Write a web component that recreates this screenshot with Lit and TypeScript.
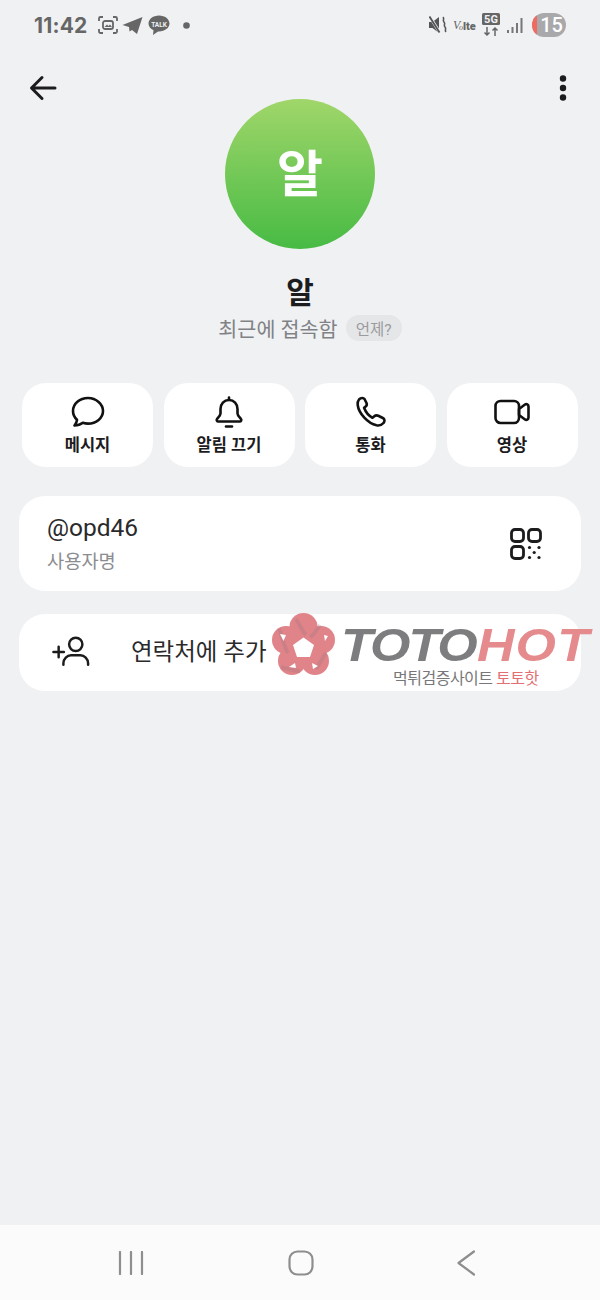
import { LitElement, html, css } from "lit";
import { customElement } from "lit/decorators.js";

@customElement("app-root")
export class AppRoot extends LitElement {
  static styles = css`
    :host { display: block; width: 600px; height: 1300px; background: #f0f1f3; position: relative; overflow: hidden; font-family: Roboto, "Noto Sans CJK KR", sans-serif; color: #1c1c1e; }
    svg { display: block; }
    .page { height: 1300px; display: flex; flex-direction: column; }
    .status { height: 50px; flex: none; display: flex; align-items: center; justify-content: space-between; padding: 0 34px; color: #666; }
    .status-left, .status-right { display: flex; align-items: center; }
    .time { font-size: 21px; font-weight: 700; color: #666; margin-right: 9px; letter-spacing: 0.2px; font-family: Inter, Roboto, sans-serif; }
    .tg { margin-left: 3px; }
    .tk { margin-left: 5px; }
    .dot { margin-left: 13px; }
    .vo { margin-left: 6px; }
    .fg { margin-left: 4px; }
    .sig { margin-left: 6px; }
    .battery { width: 34px; height: 24px; border-radius: 12px; background: #a9a9ab; color: #fff; font-size: 20px; font-weight: 500; display: flex; align-items: center; justify-content: center; overflow: hidden; position: relative; margin-left: 9px; }
    .battery i { position: absolute; left: 0; top: 0; bottom: 0; width: 5px; background: #f06a60; }
    .battery span { position: relative; padding-left: 5px; }
    .topbar { height: 49px; flex: none; display: flex; align-items: flex-start; justify-content: space-between; padding: 24px 33px 0 28px; box-sizing: border-box; }
    .hero { display: flex; flex-direction: column; align-items: center; }
    .avatar { width: 150px; height: 150px; border-radius: 50%; background: linear-gradient(180deg, #a0d66a 0%, #47bb44 100%); color: #fff; font-size: 50px; font-weight: 700; display: flex; align-items: center; justify-content: center; padding-bottom: 8px; box-sizing: border-box; }
    .name { font-size: 30px; font-weight: 700; line-height: 36px; margin-top: 26px; color: #1c1c1e; }
    .sub { display: flex; align-items: center; gap: 8px; margin-top: 1px; height: 32px; margin-left: 20px; }
    .sub b { font-weight: 400; font-size: 20.7px; color: #808285; }
    .pill { height: 26px; width: 56px; border-radius: 13px; background: #e5e6e8; color: #9a9b9e; font-size: 15.5px; display: flex; align-items: center; justify-content: center; }
    .actions { display: grid; grid-template-columns: repeat(4, 131px); column-gap: 10.5px; padding: 0 22px; margin-top: 39px; }
    .action { height: 84px; background: #fff; border-radius: 24px; display: flex; flex-direction: column; align-items: center; padding-top: 13px; box-sizing: border-box; }
    .action span { font-size: 16.5px; font-weight: 700; line-height: 20px; margin-top: 8px; color: #1c1c1e; }
    .card { margin: 0 19px; background: #fff; border-radius: 26px; }
    .user { margin-top: 29px; height: 95px; display: flex; align-items: center; justify-content: space-between; padding: 0 39px 0 28px; }
    .user .h { font-size: 24.5px; line-height: 30px; color: #2a2a2c; margin-top: -1px; }
    .user .l { font-size: 18.7px; line-height: 24px; color: #8b8c8f; margin-top: 7px; }
    .add { margin-top: 23px; height: 77px; display: flex; align-items: center; padding: 0 0 6px 33px; box-sizing: border-box; }
    .add svg { margin-top: 3px; }
    .add span { font-size: 23.5px; margin-left: 41px; color: #2a2a2c; }
    .spacer { flex: 1; }
    .nav { height: 75px; flex: none; background: #fbfbfb; display: flex; align-items: center; justify-content: space-between; padding: 0 125px 0 118px; }
    .mark { position: absolute; left: 272px; top: 612px; width: 328px; height: 80px; }
    .flower { position: absolute; left: 0; top: 1px; }
    .logo-text { position: absolute; left: 69px; top: 5px; font-family: "Liberation Sans", sans-serif; font-style: italic; font-weight: 700; font-size: 46px; line-height: 56px; white-space: nowrap; transform: scaleX(1.13); transform-origin: left center; letter-spacing: -1.7px; color: #7d7d7f; }
    .logo-text em { color: #e58a8d; font-style: italic; letter-spacing: 1px; margin-left: 1px; }
    .logo-sub { position: absolute; left: 121px; top: 57px; font-size: 16px; line-height: 20px; white-space: nowrap; color: #77777a; letter-spacing: -0.5px; }
    .logo-sub em { font-style: normal; color: #e26f73; }
  `;

  render() {
    return html`
      <div class="page">
        <div class="status">
          <div class="status-left">
            <span class="time">11:42</span>
            <svg width="22" height="20" viewBox="0 0 22 20" fill="none" stroke="#666" stroke-width="1.8">
              <path d="M2 6V3.500A1.500 1.500 0 0 1 3.500 2H6M16 2h2.500A1.500 1.500 0 0 1 20 3.500V6M20 14v2.500a1.500 1.500 0 0 1-1.500 1.500H16M6 18H3.500A1.500 1.500 0 0 1 2 16.500V14"/>
              <rect x="6" y="6" width="10" height="8" rx="2"/>
              <path d="M7.500 12l2.500-2.500 1.500 1.500 1.500-1.500 2 2.500z" fill="#666" stroke="none"/>
            </svg>
            <svg class="tg" width="21" height="19" viewBox="0 0 21 19"><path d="M20.500 1 L15 18 L10 14 L7.500 15.500 L7 11 L0.500 9 Z" fill="#666"/></svg>
            <svg class="tk" width="22" height="21" viewBox="0 0 22 21">
              <path d="M11 .5C5.200.5.500 4.100.500 8.500c0 2.900 2 5.400 5 6.800L5 20l5-3.600h1c5.800 0 10.500-3.500 10.500-7.900S16.800.5 11 .5z" fill="#666"/>
              <text x="11" y="11.500" text-anchor="middle" fill="#f0f1f3" font-size="6.500" font-weight="700" font-family="Roboto, sans-serif">TALK</text>
            </svg>
            <svg class="dot" width="7" height="7"><circle cx="3.500" cy="3.500" r="3.300" fill="#666"/></svg>
          </div>
          <div class="status-right">
            <svg width="18" height="20" viewBox="0 0 18 20" fill="#555">
              <path d="M0 7h3.500L10 2v16l-6.500-5H0z"/>
              <path d="M1 2l10 16" stroke="#f0f1f3" stroke-width="3"/><path d="M.5 1.500l10 16" stroke="#555" stroke-width="1.800"/>
              <path d="M14 2c2 2-1 3 1 5s-1 3 1 5-1 3 1 5" fill="none" stroke="#555" stroke-width="1.600"/>
            </svg>
            <svg class="vo" width="24" height="16" viewBox="0 0 24 16">
              <text x="0" y="12" font-family="Liberation Serif, serif" font-style="italic" font-size="12" fill="#666">V</text>
              <text x="6" y="13" font-family="Liberation Serif, serif" font-style="italic" font-size="8" fill="#666">o</text>
              <text x="10" y="13" font-family="Roboto, sans-serif" font-weight="900" font-size="11" fill="#666">lte</text>
            </svg>
            <svg class="fg" width="20" height="24" viewBox="0 0 20 24">
              <rect x="1" y="0" width="18" height="12" rx="1.500" fill="#666"/>
              <text x="10" y="10" text-anchor="middle" font-family="Roboto, sans-serif" font-weight="700" font-size="11" fill="#f0f1f3">5G</text>
              <path d="M6 14v8M3.500 19.500L6 22l2.500-2.500M14 23v-8M11.500 17.500L14 15l2.500 2.500" fill="none" stroke="#666" stroke-width="1.500"/>
            </svg>
            <svg class="sig" width="16" height="17" viewBox="0 0 16 17" fill="#777">
              <rect x="0" y="13" width="2" height="3"/><rect x="4.500" y="10" width="2" height="6"/><rect x="9" y="6" width="2" height="10"/><rect x="13.500" y="1" width="2" height="15"/>
            </svg>
            <div class="battery"><i></i><span>15</span></div>
          </div>
        </div>

        <div class="topbar">
          <svg width="30" height="28" viewBox="0 0 30 28" fill="none" stroke="#1c1c1e" stroke-width="3" stroke-linecap="round" stroke-linejoin="round"><path d="M27 14H4M14 3.500L3.500 14 14 24.500"/></svg>
          <svg width="8" height="28" viewBox="0 0 8 28" fill="#1c1c1e"><circle cx="4" cy="4.500" r="3.200"/><circle cx="4" cy="14" r="3.200"/><circle cx="4" cy="23.500" r="3.200"/></svg>
        </div>

        <div class="hero">
          <div class="avatar">알</div>
          <div class="name">알</div>
          <div class="sub"><b>최근에 접속함</b><div class="pill">언제?</div></div>
        </div>

        <div class="actions">
          <div class="action">
            <svg width="34" height="32" viewBox="0 0 34 32" fill="none" stroke="#111" stroke-width="2.600" stroke-linejoin="round" stroke-linecap="round"><path d="M17 2C8.700 2 2 7.900 2 15c0 3.400 1.500 6.500 4 8.800-.2 2-1.200 4.200-2.500 5.700 3.500 0 6.200-1 8.300-2.700 1.600.5 3.400.8 5.200.8 8.300 0 15-5.700 15-12.600S25.300 2 17 2z"/></svg>
            <span>메시지</span>
          </div>
          <div class="action">
            <svg width="30" height="32" viewBox="0 0 30 32" fill="none" stroke="#111" stroke-width="2.600" stroke-linejoin="round" stroke-linecap="round"><path d="M15 4c-5 0-8.500 3.800-8.500 9v4.500c0 2-2 3.800-3.500 5.500-.8 1 0 2.500 1.300 2.500h21.400c1.300 0 2.100-1.500 1.300-2.500-1.500-1.700-3.500-3.500-3.500-5.500V13c0-5.200-3.500-9-8.500-9zM15 1.500V4"/><path d="M12 30.500h6"/></svg>
            <span>알림 끄기</span>
          </div>
          <div class="action">
            <svg width="32" height="32" viewBox="0 0 32 32" fill="none" stroke="#111" stroke-width="2.600" stroke-linejoin="round" stroke-linecap="round"><path d="M4 3.500C6 1.500 8.500 1.500 9.500 3l2 4c.6 1.400.3 2.600-.8 3.500l-1.600 1.300c1.500 4.200 4.300 7.800 8.400 10l1.800-1.500c1.200-1 2.500-1.200 4-.5l4.500 2.200c2 1 2.200 3.400.7 5-1.700 2-4.300 2.800-7 2.300C13 27.500 3.800 17.500 2.700 9 2.400 7 2.800 5 4 3.500z"/></svg>
            <span>통화</span>
          </div>
          <div class="action">
            <svg width="36" height="32" viewBox="0 0 36 32" fill="none" stroke="#111" stroke-width="2.600" stroke-linejoin="round"><rect x="1.500" y="5" width="23.500" height="22" rx="5"/><path d="M25 13l6-4.500c1.500-1 3.500 0 3.500 2v11c0 2-2 3-3.500 2L25 19z"/></svg>
            <span>영상</span>
          </div>
        </div>

        <div class="card user">
          <div>
            <div class="h">@opd46</div>
            <div class="l">사용자명</div>
          </div>
          <svg width="32" height="32" viewBox="0 0 32 32" fill="none" stroke="#1c1c1e" stroke-width="2.800">
            <rect x="1.500" y="1.500" width="12" height="12" rx="3.500"/>
            <rect x="18.500" y="1.500" width="12" height="12" rx="3.500"/>
            <rect x="1.500" y="18.500" width="12" height="12" rx="3.500"/>
            <g fill="#1c1c1e" stroke="none"><circle cx="19.500" cy="19.500" r="1.600"/><circle cx="29" cy="19.500" r="1.600"/><circle cx="24.200" cy="24.500" r="1.600"/><circle cx="19.500" cy="29.500" r="1.600"/><circle cx="29" cy="29.500" r="1.600"/></g>
          </svg>
        </div>

        <div class="card add">
          <svg width="38" height="32" viewBox="0 0 40 32" fill="none" stroke="#1c1c1e" stroke-width="2.600" stroke-linecap="round">
            <path d="M1.500 17h11M7 11.500v11"/>
            <circle cx="25" cy="9" r="7"/>
            <path d="M12 30.500v-1.500c0-5 4-8.500 8-8.500h10c4 0 8 3.500 8 8.500v1.500"/>
          </svg>
          <span>연락처에 추가</span>
        </div>

        <div class="spacer"></div>

        <div class="nav">
          <svg width="26" height="24" viewBox="0 0 26 24" stroke="#8e8e90" stroke-width="2.200" stroke-linecap="round"><path d="M2 1v22M13 1v22M24 1v22"/></svg>
          <svg width="26" height="26" viewBox="0 0 26 26" fill="none" stroke="#8e8e90" stroke-width="2.200"><rect x="1.500" y="1.500" width="23" height="23" rx="8"/></svg>
          <svg width="18" height="26" viewBox="0 0 18 26" fill="none" stroke="#8e8e90" stroke-width="2.200" stroke-linecap="round" stroke-linejoin="round"><path d="M17 1.500L1.500 13 17 24.500"/></svg>
        </div>
      </div>

      <div class="mark">
        <svg class="flower" width="64" height="64" viewBox="0 0 64 64">
          <g fill="#e0848a">
            <circle cx="31.500" cy="14" r="14"/><circle cx="14" cy="27" r="14"/><circle cx="49" cy="27" r="14"/><circle cx="20" cy="48" r="14"/><circle cx="43" cy="48" r="14"/>
          </g>
          <g fill="none" stroke="#a97a80" stroke-width="4" opacity="0.350">
            <path d="M24 6 C28 12 30 18 34 22"/><path d="M7 16 C10 22 12 34 16 40"/><path d="M48 12 C44 18 42 22 38 24"/><path d="M9 54 C16 56 22 58 28 58"/><path d="M54 40 C50 46 48 50 44 56"/>
          </g>
          <path d="M31.500 24.500 L42 32 L38 44 L25 44 L21 32 Z" fill="#fff"/>
          <g fill="#fff"><path d="M8 21l6 1-2.500 6z"/><path d="M52 22l4 1-3 5z"/><path d="M17 54l6-4 1 5z"/><path d="M40 50l6 3-5 3z"/></g>
        </svg>
        <div class="logo-text">TOTO<em>HOT</em></div>
        <div class="logo-sub">먹튀검증사이트 <em>토토핫</em></div>
      </div>
    `;
  }
}
